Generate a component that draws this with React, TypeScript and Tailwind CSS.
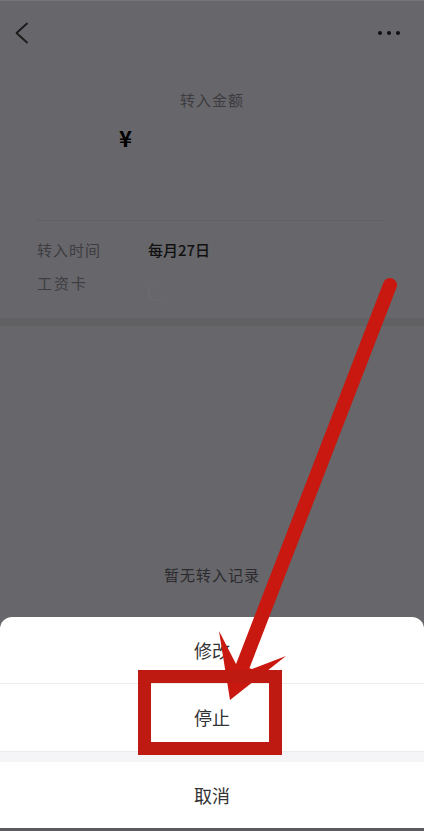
const FONT = { fontFamily: '"Noto Sans CJK SC", "Noto Sans", sans-serif' };

function Annotation() {
  return (
    <svg className="pointer-events-none absolute inset-0 h-full w-full" viewBox="0 0 424 831">
      <line x1="390" y1="285" x2="242" y2="668" stroke="#c8180f" strokeWidth="14" strokeLinecap="round" />
      <polygon points="230,700 219,631 236,664 252,669 286,656" fill="#c8180f" />
      <rect x="144.5" y="676.5" width="131" height="72" fill="none" stroke="#bf1a12" strokeWidth="13" />
    </svg>
  );
}

function Sheet() {
  return (
    <div className="absolute inset-x-0 bottom-0 flex flex-col overflow-hidden rounded-t-[12px] bg-white text-[#333]">
      <button className="flex h-[67px] items-center justify-center border-b border-[#ececec] text-[18px]">修改</button>
      <button className="flex h-[68px] items-center justify-center border-b border-[#ececec] text-[18px]">停止</button>
      <div className="h-[10px] bg-[#f5f4f7]" />
      <button className="flex h-[66px] items-center justify-center text-[18px]">取消</button>
      <div className="h-[3px] bg-[#5c5b5f]" />
    </div>
  );
}

export default function App() {
  return (
    <div className="relative h-[831px] w-[424px] overflow-hidden bg-[#67666a]" style={FONT}>
      <div className="h-px bg-[#77767a]" />
      <div className="flex h-[63px] items-center justify-between pl-[14px] pr-[24px]">
        <svg width="16" height="22" viewBox="0 0 16 22" fill="none">
          <polyline points="13,1.5 2.5,11 13,20.5" stroke="#1a1a1a" strokeWidth="1.8" strokeLinecap="round" strokeLinejoin="round" />
        </svg>
        <div className="flex gap-[5px]">
          <span className="h-[4px] w-[4px] rounded-full bg-[#111]" />
          <span className="h-[4px] w-[4px] rounded-full bg-[#111]" />
          <span className="h-[4px] w-[4px] rounded-full bg-[#111]" />
        </div>
      </div>

      <div className="flex flex-col pb-[25px]">
        <p className="mt-[26px] text-center text-[15px] leading-[20px] tracking-[1px] text-[#3d3c40]">转入金额</p>
        <p className="mt-[13px] pl-[119px] text-[22px] font-bold leading-[28px] text-black">¥</p>
        <div className="mx-[36px] mt-[69px] mr-[39px] h-px bg-[#616064]" />
        <div className="mt-[19px] flex h-[20px] items-center pl-[37px] text-[15px] leading-[20px]">
          <span className="w-[111px] tracking-[1px] text-[#3e3d41]">转入时间</span>
          <span className="font-medium text-[#111]">每月27日</span>
        </div>
        <div className="mt-[13px] flex h-[20px] items-center pl-[37px] text-[15px] leading-[20px]">
          <span className="w-[111px] tracking-[2px] text-[#3e3d41]">工资卡</span>
          <span className="h-[18px] w-[18px] translate-y-[9px] rounded-full border-b border-l border-[#6f6e72]" />
        </div>
      </div>
      <div className="h-[8px] bg-[#616063]" />

      <p className="mt-[239px] text-center text-[15px] leading-[20px] tracking-[1px] text-[#2b2a2e]">暂无转入记录</p>

      <Sheet />
      <Annotation />
    </div>
  );
}
